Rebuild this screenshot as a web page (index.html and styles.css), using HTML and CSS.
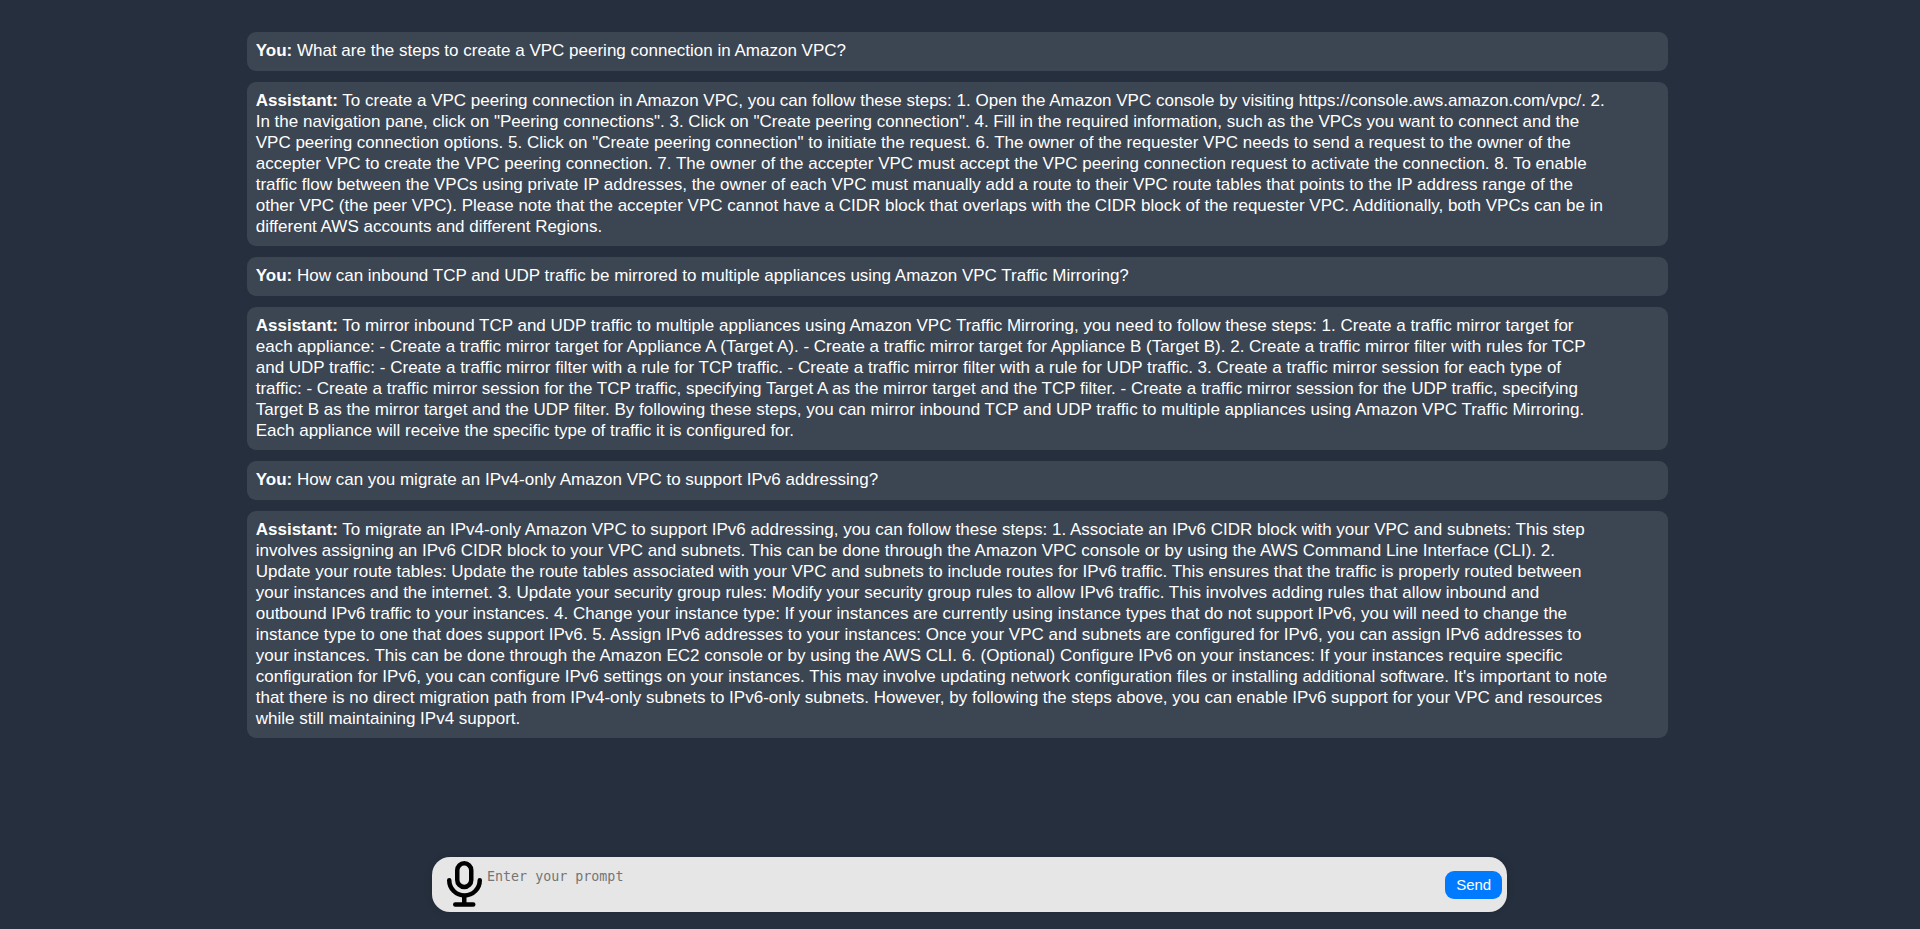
FILE: index.html
```html
<!DOCTYPE html>
<html lang="en">
<head>
<meta charset="utf-8">
<title>Chat Assistant</title>
<link rel="stylesheet" href="styles.css">
</head>
<body>
<main class="chat">
  <p class="message user"><strong>You:</strong> What are the steps to create a VPC peering connection in Amazon VPC?</p>
  <p class="message assistant"><strong>Assistant:</strong> To create a VPC peering connection in Amazon VPC, you can follow these steps: 1. Open the Amazon VPC console by visiting https://console.aws.amazon.com/vpc/. 2. In the navigation pane, click on "Peering connections". 3. Click on "Create peering connection". 4. Fill in the required information, such as the VPCs you want to connect and the VPC peering connection options. 5. Click on "Create peering connection" to initiate the request. 6. The owner of the requester VPC needs to send a request to the owner of the accepter VPC to create the VPC peering connection. 7. The owner of the accepter VPC must accept the VPC peering connection request to activate the connection. 8. To enable traffic flow between the VPCs using private IP addresses, the owner of each VPC must manually add a route to their VPC route tables that points to the IP address range of the other VPC (the peer VPC). Please note that the accepter VPC cannot have a CIDR block that overlaps with the CIDR block of the requester VPC. Additionally, both VPCs can be in different AWS accounts and different Regions.</p>
  <p class="message user"><strong>You:</strong> How can inbound TCP and UDP traffic be mirrored to multiple appliances using Amazon VPC Traffic Mirroring?</p>
  <p class="message assistant"><strong>Assistant:</strong> To mirror inbound TCP and UDP traffic to multiple appliances using Amazon VPC Traffic Mirroring, you need to follow these steps: 1. Create a traffic mirror target for each appliance: - Create a traffic mirror target for Appliance A (Target A). - Create a traffic mirror target for Appliance B (Target B). 2. Create a traffic mirror filter with rules for TCP and UDP traffic: - Create a traffic mirror filter with a rule for TCP traffic. - Create a traffic mirror filter with a rule for UDP traffic. 3. Create a traffic mirror session for each type of traffic: - Create a traffic mirror session for the TCP traffic, specifying Target A as the mirror target and the TCP filter. - Create a traffic mirror session for the UDP traffic, specifying Target B as the mirror target and the UDP filter. By following these steps, you can mirror inbound TCP and UDP traffic to multiple appliances using Amazon VPC Traffic Mirroring. Each appliance will receive the specific type of traffic it is configured for.</p>
  <p class="message user"><strong>You:</strong> How can you migrate an IPv4-only Amazon VPC to support IPv6 addressing?</p>
  <p class="message assistant"><strong>Assistant:</strong> To migrate an IPv4-only Amazon VPC to support IPv6 addressing, you can follow these steps: 1. Associate an IPv6 CIDR block with your VPC and subnets: This step involves assigning an IPv6 CIDR block to your VPC and subnets. This can be done through the Amazon VPC console or by using the AWS Command Line Interface (CLI). 2. Update your route tables: Update the route tables associated with your VPC and subnets to include routes for IPv6 traffic. This ensures that the traffic is properly routed between your instances and the internet. 3. Update your security group rules: Modify your security group rules to allow IPv6 traffic. This involves adding rules that allow inbound and outbound IPv6 traffic to your instances. 4. Change your instance type: If your instances are currently using instance types that do not support IPv6, you will need to change the instance type to one that does support IPv6. 5. Assign IPv6 addresses to your instances: Once your VPC and subnets are configured for IPv6, you can assign IPv6 addresses to your instances. This can be done through the Amazon EC2 console or by using the AWS CLI. 6. (Optional) Configure IPv6 on your instances: If your instances require specific configuration for IPv6, you can configure IPv6 settings on your instances. This may involve updating network configuration files or installing additional software. It's important to note that there is no direct migration path from IPv4-only subnets to IPv6-only subnets. However, by following the steps above, you can enable IPv6 support for your VPC and resources while still maintaining IPv4 support.</p>
</main>
<footer class="dock">
  <form class="prompt">
    <button class="mic" type="button" aria-label="Record voice">
      <svg width="36" height="49" viewBox="0 0 36 49" fill="none" stroke="#000" stroke-width="4.5" stroke-linecap="round" stroke-linejoin="round">
        <rect x="11.25" y="3.25" width="14" height="23.75" rx="7"/>
        <path d="M3.250 20.250a15.250 15.250 0 0 0 30.500 0M18.250 35.500v9M9.250 44.500h18"/>
      </svg>
    </button>
    <textarea class="entry" rows="2" aria-label="Prompt" placeholder="Enter your prompt"></textarea>
    <button class="send" type="submit">Send</button>
  </form>
</footer>
</body>
</html>
```
FILE: styles.css
```css
* {
  box-sizing: border-box;
}

body {
  display: flex;
  flex-direction: column;
  min-height: 100vh;
  margin: 0;
  background: #252f3d;
  color: #fff;
  font-family: "Liberation Sans", Arial, sans-serif;
  font-size: 17px;
  line-height: 21px;
}

.chat {
  display: flex;
  flex: 1;
  flex-direction: column;
  gap: 11px;
  padding: 32px 13.1% 32px 12.85%;
}

.message {
  margin: 0;
  padding: 8px 57px 9px 9px;
  border-radius: 9px;
  background: #3c4552;
}

.user {
  padding-bottom: 10px;
}

.dock {
  padding: 0 21.5% 17px 22.5%;
}

.prompt {
  display: flex;
  align-items: center;
  min-height: 55px;
  padding: 0 5px 0 14px;
  border-radius: 18px;
  background: #e6e6e6;
  box-shadow: 0 0 9px rgba(0, 0, 0, 0.1);
}

.mic {
  display: flex;
  padding: 0;
  border: 0;
  background: none;
}

.entry {
  flex: 1;
  min-width: 0;
  height: 36px;
  padding: 2px 5px;
  border: 0;
  outline: 0;
  background: none;
  font-family: "DejaVu Sans Mono", monospace;
  resize: none;
}

.entry::placeholder {
  color: #757575;
}

.send {
  width: 57px;
  height: 28px;
  padding: 0;
  border: 0;
  border-radius: 9px;
  background: #007bff;
  color: #fff;
  font-family: inherit;
  font-size: 15px;
}
```
